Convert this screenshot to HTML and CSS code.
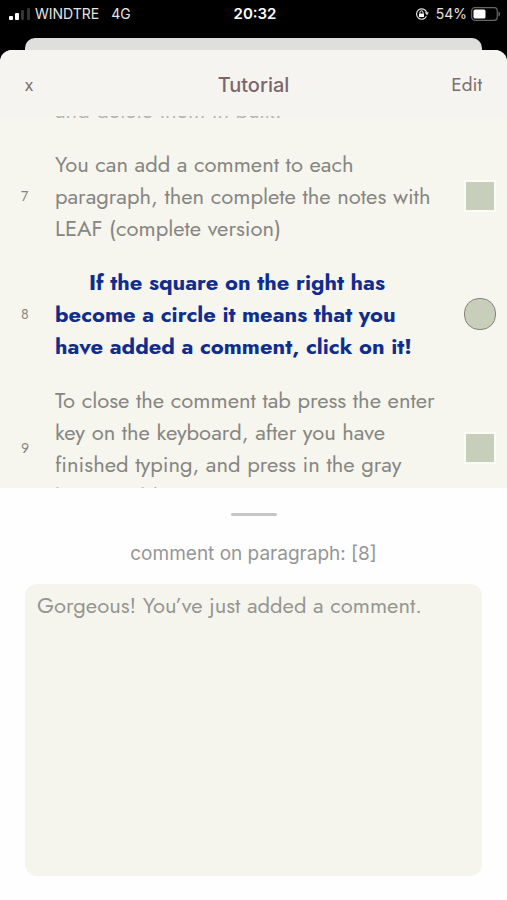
FILE: index.html
```html
<!DOCTYPE html>
<html lang="en">
<head>
  <meta charset="UTF-8">
  <meta name="viewport" content="width=device-width, initial-scale=1.0">
  <title>Tutorial</title>
  <link rel="stylesheet" href="styles.css">
</head>
<body>

  <div class="status-bar">
    <div class="status-left">
      <svg class="signal" width="22" height="14" viewBox="0 0 22 14">
        <rect x="0" y="9" width="4" height="4" rx="1" fill="#fff"/>
        <rect x="6" y="6" width="4" height="7" rx="1" fill="#fff"/>
        <rect x="12" y="3" width="3" height="10" rx="1" fill="#333"/>
        <rect x="18" y="1" width="3" height="12" rx="1" fill="#333"/>
      </svg>
      <span>WINDTRE</span>
      <span class="network">4G</span>
    </div>
    <div class="time">20:32</div>
    <div class="status-right">
      <svg width="14" height="14" viewBox="0 0 14 14">
        <path d="M11.6 5.2A5.2 5.2 0 1 0 11.4 9.3" fill="none" stroke="#ddd" stroke-width="1.2"/>
        <path d="M9.8 5.3h4l-1.8 3.2z" fill="#ddd"/>
        <rect x="4" y="6.4" width="5" height="3.6" rx=".5" fill="#fff"/>
        <path d="M5 6.6V5.3a1.5 1.5 0 0 1 3 0v1.3" fill="none" stroke="#fff"/>
      </svg>
      <span class="percent">54%</span>
      <svg width="30" height="14" viewBox="0 0 30 14">
        <rect x=".7" y=".7" width="25.6" height="12.6" rx="3" fill="none" stroke="#666" stroke-width="1.2"/>
        <rect x="2.5" y="2.5" width="12" height="9" rx="1.5" fill="#fff"/>
        <path d="M27.5 4.5a2.7 2.7 0 0 1 0 5z" fill="#666"/>
      </svg>
    </div>
  </div>

  <div class="back-sheet"></div>

  <main class="sheet">
    <header class="header">
      <button class="close" type="button" aria-label="Close">x</button>
      <h1>Tutorial</h1>
      <button class="edit" type="button">Edit</button>
    </header>

    <div class="notes">
      <ol class="list">
        <li class="row previous">
          <span class="number"></span>
          <p>and delete them in bulk.</p>
        </li>
        <li class="row">
          <span class="number">7</span>
          <p>You can add a comment to each<br>paragraph, then complete the notes with<br>LEAF (complete version)</p>
          <button class="mark" type="button" aria-label="Comment on paragraph 7"></button>
        </li>
        <li class="row commented">
          <span class="number">8</span>
          <p>If the square on the right has<br>become a circle it means that you<br>have added a comment, click on it!</p>
          <button class="mark" type="button" aria-label="Comment on paragraph 8"></button>
        </li>
        <li class="row">
          <span class="number">9</span>
          <p>To close the comment tab press the enter<br>key on the keyboard, after you have<br>finished typing, and press in the gray<br>bar possible</p>
          <button class="mark" type="button" aria-label="Comment on paragraph 9"></button>
        </li>
      </ol>
    </div>

    <section class="comment">
      <div class="handle"></div>
      <label for="comment">comment on paragraph: [8]</label>
      <textarea id="comment">Gorgeous! You’ve just added a comment.</textarea>
    </section>
  </main>

</body>
</html>
```

FILE: styles.css
```css
* {
  box-sizing: border-box;
}
body {
  margin: 0;
  height: 100vh;
  display: flex;
  flex-direction: column;
  background: #000;
  color: #868682;
  font-family: Jost, Lato, sans-serif;
  font-size: 22px;
}
button {
  border: 0;
  padding: 0;
  background: none;
  color: #7d6e70;
  font-family: inherit;
  cursor: pointer;
}
.status-bar {
  display: grid;
  grid-template-columns: 1fr auto 1fr;
  align-items: center;
  height: 27px;
  margin-bottom: 11px;
  padding: 0 6px 0 9px;
  color: #e4e4e4;
  font-family: Inter, sans-serif;
  font-size: 14px;
}
.status-left,
.status-right {
  display: flex;
  align-items: center;
  gap: 4px;
}
.status-right {
  justify-content: flex-end;
}
.network {
  margin-left: 8px;
}
.percent {
  margin-left: 3px;
}
.time {
  font-size: 15px;
  font-weight: 600;
  color: #fff;
}
.back-sheet {
  height: 12px;
  margin: 0 25px;
  border-radius: 10px 10px 0 0;
  background: #dfdfde;
}
.sheet {
  flex: 1;
  min-height: 0;
  display: flex;
  flex-direction: column;
  border-radius: 12px 12px 0 0;
  overflow: hidden;
  background: #f6f5ee;
}
.header {
  display: grid;
  grid-template-columns: 1fr auto 1fr;
  align-items: center;
  height: 66px;
  padding: 3px 25px 0;
  background: #f5f4f1;
}
.header h1 {
  margin: 0;
  color: #7d6669;
  font-family: Inter, sans-serif;
  font-size: 20px;
  font-weight: 500;
}
.close,
.edit {
  justify-self: start;
  font-size: 19px;
}
.edit {
  justify-self: end;
}
.notes {
  flex: 0 0 372px;
  overflow: hidden;
}
/* scrolled so that the end of the previous paragraph is under the header */
.list {
  display: flex;
  flex-direction: column;
  gap: 22px;
  margin: -22px 0 0;
  padding: 0;
  list-style: none;
}
.row {
  display: grid;
  grid-template-columns: 34px 1fr 32px;
  align-items: center;
  padding: 0 11px 0 21px;
}
.row p {
  margin: 0;
  line-height: 32px;
  white-space: nowrap;
}
.previous {
  color: #b5b5b0;
}
.number {
  font-size: 14px;
}
.mark {
  justify-self: center;
  width: 32px;
  height: 32px;
  border: 2px solid #fbfbf8;
  background: #c7cfbb;
}
.commented p {
  color: #102d8c;
  font-weight: bold;
  text-indent: 34px;
}
.commented .mark {
  border: 1px solid #8b7f7e;
  border-radius: 15px;
}
.comment {
  flex: 1;
  display: flex;
  flex-direction: column;
  align-items: center;
  padding: 25px 25px 24px;
  background: #fefefe;
}
.handle {
  width: 46px;
  height: 3px;
  border-radius: 2px;
  background: #c6c6c6;
}
.comment label {
  margin: 26px 0 18px;
  color: #969696;
  font-family: Inter, sans-serif;
  font-size: 19px;
  line-height: 24px;
}
.comment textarea {
  flex: 1;
  width: 100%;
  padding: 5px 12px;
  border: 0;
  border-radius: 12px;
  outline: 0;
  resize: none;
  background: #f5f5ed;
  color: #969692;
  font-family: inherit;
  font-size: 22px;
  line-height: 32px;
}
```
